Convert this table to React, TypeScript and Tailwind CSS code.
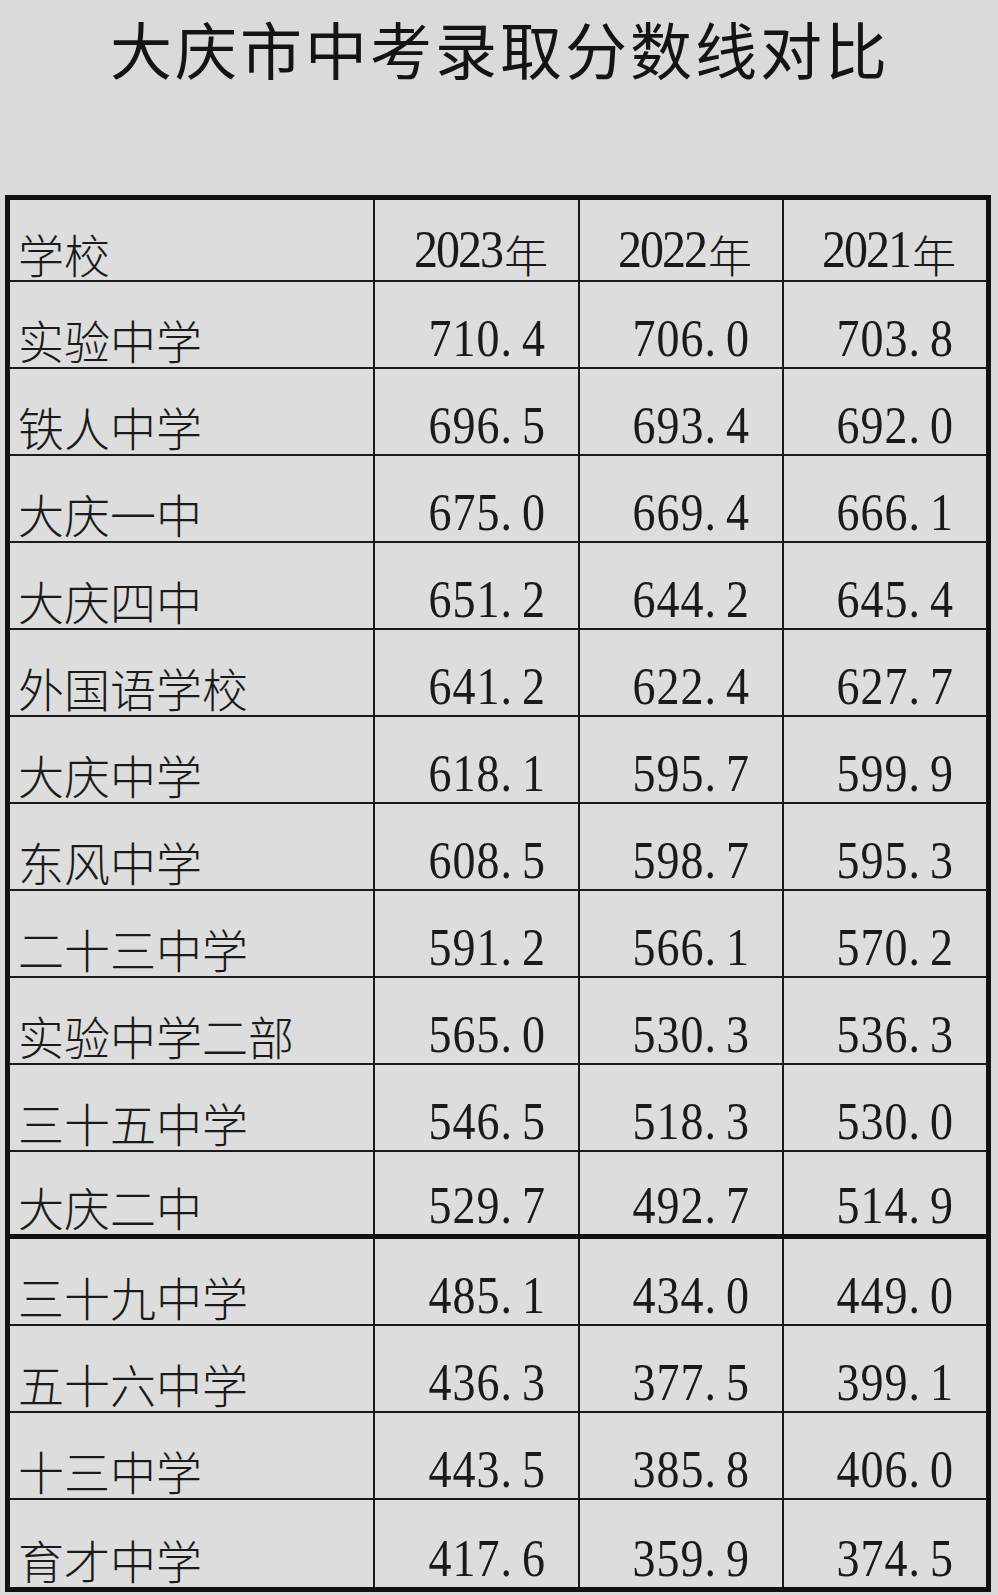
import React from "react";

const rows: [string, string, string, string][] = [
  ["实验中学", "710.4", "706.0", "703.8"],
  ["铁人中学", "696.5", "693.4", "692.0"],
  ["大庆一中", "675.0", "669.4", "666.1"],
  ["大庆四中", "651.2", "644.2", "645.4"],
  ["外国语学校", "641.2", "622.4", "627.7"],
  ["大庆中学", "618.1", "595.7", "599.9"],
  ["东风中学", "608.5", "598.7", "595.3"],
  ["二十三中学", "591.2", "566.1", "570.2"],
  ["实验中学二部", "565.0", "530.3", "536.3"],
  ["三十五中学", "546.5", "518.3", "530.0"],
  ["大庆二中", "529.7", "492.7", "514.9"],
  ["三十九中学", "485.1", "434.0", "449.0"],
  ["五十六中学", "436.3", "377.5", "399.1"],
  ["十三中学", "443.5", "385.8", "406.0"],
  ["育才中学", "417.6", "359.9", "374.5"],
];

const cjk = "font-['Noto_Sans_CJK_SC',sans-serif]";
const serif = "font-['Liberation_Serif','Noto_Sans_CJK_SC',serif]";

function Num({ v }: { v: string }) {
  const [a, b] = v.split(".");
  return (
    <span
      className={`${serif} inline-block origin-bottom scale-y-[1.15] text-[46px] leading-none tracking-[1px] text-[#1a1a1a]`}
    >
      {a}.<span className="ml-[9px]">{b}</span>
    </span>
  );
}

export default function App() {
  return (
    <main className="w-[998px] h-[1595px] bg-[#d9dad9] overflow-hidden">
      <h1
        className={`${cjk} text-[62px] leading-none text-[#141414] tracking-[3px] pl-[110px] pt-[17px] h-[195px]`}
      >
        大庆市中考录取分数线对比
      </h1>
      <div className="ml-[5px] w-[986px] border-[5px] border-[#111] bg-[#dcdddc]">
        <div className="grid grid-cols-[363px_205px_204px_1fr] h-[82px] border-b-2 border-[#1a1a1a]">
          <div
            className={`${cjk} font-light text-[46px] leading-none text-[#1a1a1a] flex items-end pl-[8px] pb-[4px]`}
          >
            学校
          </div>
          {["2023", "2022", "2021"].map((y) => (
            <div
              key={y}
              className="border-l-2 border-[#1a1a1a] flex items-end justify-end pr-[30px] pb-[4px]"
            >
              <span
                className={`${serif} inline-block origin-bottom scale-y-[1.1] text-[48px] leading-none tracking-[-2px] text-[#1a1a1a]`}
              >
                {y}
              </span>
              <span
                className={`${cjk} font-light text-[44px] leading-none text-[#1a1a1a] ml-[2px]`}
              >
                年
              </span>
            </div>
          ))}
        </div>
        {rows.map((r, i) => (
          <div
            key={r[0]}
            className={`grid grid-cols-[363px_205px_204px_1fr] h-[87px] ${
              i === rows.length - 1
                ? ""
                : i === 10
                ? "border-b-[5px] border-[#111]"
                : "border-b-2 border-[#1a1a1a]"
            }`}
          >
            <div
              className={`${cjk} font-light text-[46px] leading-none text-[#1a1a1a] flex items-end pl-[8px] pb-[5px] whitespace-nowrap`}
            >
              {r[0]}
            </div>
            {r.slice(1).map((v, j) => (
              <div
                key={j}
                className="border-l-2 border-[#1a1a1a] flex items-end justify-end pr-[32px] pb-[2px]"
              >
                <Num v={v} />
              </div>
            ))}
          </div>
        ))}
      </div>
    </main>
  );
}
